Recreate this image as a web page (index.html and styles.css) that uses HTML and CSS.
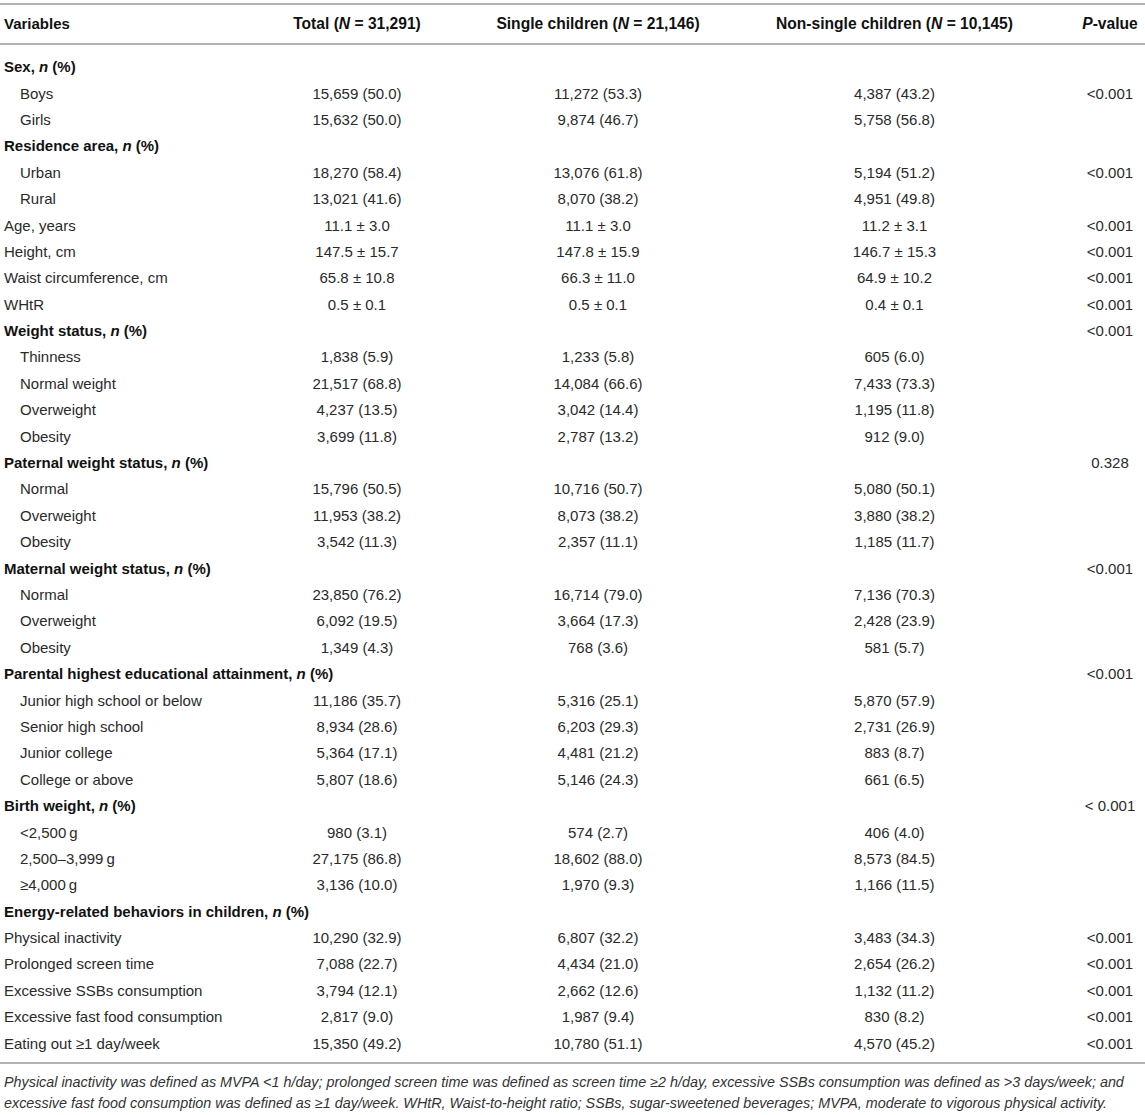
FILE: index.html
```html
<!DOCTYPE html>
<html lang="en">
<head>
  <meta charset="UTF-8">
  <title>Characteristics of single and non-single children</title>
  <link rel="stylesheet" href="styles.css">
</head>
<body>
  <table class="stats">
    <colgroup>
      <col class="col-var">
      <col class="col-total">
      <col class="col-single">
      <col class="col-non">
      <col class="col-p">
    </colgroup>
    <thead>
      <tr>
        <th class="var">Variables</th>
        <th>Total (<i>N</i> = 31,291)</th>
        <th>Single children (<i>N</i> = 21,146)</th>
        <th>Non-single children (<i>N</i> = 10,145)</th>
        <th><i>P</i>-value</th>
      </tr>
    </thead>
    <tbody>
      <tr class="group"><td>Sex, <i>n</i> (%)</td><td></td><td></td><td></td><td></td></tr>
      <tr><td class="sub">Boys</td><td>15,659 (50.0)</td><td>11,272 (53.3)</td><td>4,387 (43.2)</td><td>&lt;0.001</td></tr>
      <tr><td class="sub">Girls</td><td>15,632 (50.0)</td><td>9,874 (46.7)</td><td>5,758 (56.8)</td><td></td></tr>
      <tr class="group"><td>Residence area, <i>n</i> (%)</td><td></td><td></td><td></td><td></td></tr>
      <tr><td class="sub">Urban</td><td>18,270 (58.4)</td><td>13,076 (61.8)</td><td>5,194 (51.2)</td><td>&lt;0.001</td></tr>
      <tr><td class="sub">Rural</td><td>13,021 (41.6)</td><td>8,070 (38.2)</td><td>4,951 (49.8)</td><td></td></tr>
      <tr><td>Age, years</td><td>11.1 ± 3.0</td><td>11.1 ± 3.0</td><td>11.2 ± 3.1</td><td>&lt;0.001</td></tr>
      <tr><td>Height, cm</td><td>147.5 ± 15.7</td><td>147.8 ± 15.9</td><td>146.7 ± 15.3</td><td>&lt;0.001</td></tr>
      <tr><td>Waist circumference, cm</td><td>65.8 ± 10.8</td><td>66.3 ± 11.0</td><td>64.9 ± 10.2</td><td>&lt;0.001</td></tr>
      <tr><td>WHtR</td><td>0.5 ± 0.1</td><td>0.5 ± 0.1</td><td>0.4 ± 0.1</td><td>&lt;0.001</td></tr>
      <tr class="group"><td>Weight status, <i>n</i> (%)</td><td></td><td></td><td></td><td>&lt;0.001</td></tr>
      <tr><td class="sub">Thinness</td><td>1,838 (5.9)</td><td>1,233 (5.8)</td><td>605 (6.0)</td><td></td></tr>
      <tr><td class="sub">Normal weight</td><td>21,517 (68.8)</td><td>14,084 (66.6)</td><td>7,433 (73.3)</td><td></td></tr>
      <tr><td class="sub">Overweight</td><td>4,237 (13.5)</td><td>3,042 (14.4)</td><td>1,195 (11.8)</td><td></td></tr>
      <tr><td class="sub">Obesity</td><td>3,699 (11.8)</td><td>2,787 (13.2)</td><td>912 (9.0)</td><td></td></tr>
      <tr class="group"><td>Paternal weight status, <i>n</i> (%)</td><td></td><td></td><td></td><td>0.328</td></tr>
      <tr><td class="sub">Normal</td><td>15,796 (50.5)</td><td>10,716 (50.7)</td><td>5,080 (50.1)</td><td></td></tr>
      <tr><td class="sub">Overweight</td><td>11,953 (38.2)</td><td>8,073 (38.2)</td><td>3,880 (38.2)</td><td></td></tr>
      <tr><td class="sub">Obesity</td><td>3,542 (11.3)</td><td>2,357 (11.1)</td><td>1,185 (11.7)</td><td></td></tr>
      <tr class="group"><td>Maternal weight status, <i>n</i> (%)</td><td></td><td></td><td></td><td>&lt;0.001</td></tr>
      <tr><td class="sub">Normal</td><td>23,850 (76.2)</td><td>16,714 (79.0)</td><td>7,136 (70.3)</td><td></td></tr>
      <tr><td class="sub">Overweight</td><td>6,092 (19.5)</td><td>3,664 (17.3)</td><td>2,428 (23.9)</td><td></td></tr>
      <tr><td class="sub">Obesity</td><td>1,349 (4.3)</td><td>768 (3.6)</td><td>581 (5.7)</td><td></td></tr>
      <tr class="group"><td>Parental highest educational attainment, <i>n</i> (%)</td><td></td><td></td><td></td><td>&lt;0.001</td></tr>
      <tr><td class="sub">Junior high school or below</td><td>11,186 (35.7)</td><td>5,316 (25.1)</td><td>5,870 (57.9)</td><td></td></tr>
      <tr><td class="sub">Senior high school</td><td>8,934 (28.6)</td><td>6,203 (29.3)</td><td>2,731 (26.9)</td><td></td></tr>
      <tr><td class="sub">Junior college</td><td>5,364 (17.1)</td><td>4,481 (21.2)</td><td>883 (8.7)</td><td></td></tr>
      <tr><td class="sub">College or above</td><td>5,807 (18.6)</td><td>5,146 (24.3)</td><td>661 (6.5)</td><td></td></tr>
      <tr class="group"><td>Birth weight, <i>n</i> (%)</td><td></td><td></td><td></td><td>&lt; 0.001</td></tr>
      <tr><td class="sub">&lt;2,500&thinsp;g</td><td>980 (3.1)</td><td>574 (2.7)</td><td>406 (4.0)</td><td></td></tr>
      <tr><td class="sub">2,500–3,999&thinsp;g</td><td>27,175 (86.8)</td><td>18,602 (88.0)</td><td>8,573 (84.5)</td><td></td></tr>
      <tr><td class="sub">≥4,000&thinsp;g</td><td>3,136 (10.0)</td><td>1,970 (9.3)</td><td>1,166 (11.5)</td><td></td></tr>
      <tr class="group"><td>Energy-related behaviors in children, <i>n</i> (%)</td><td></td><td></td><td></td><td></td></tr>
      <tr><td>Physical inactivity</td><td>10,290 (32.9)</td><td>6,807 (32.2)</td><td>3,483 (34.3)</td><td>&lt;0.001</td></tr>
      <tr><td>Prolonged screen time</td><td>7,088 (22.7)</td><td>4,434 (21.0)</td><td>2,654 (26.2)</td><td>&lt;0.001</td></tr>
      <tr><td>Excessive SSBs consumption</td><td>3,794 (12.1)</td><td>2,662 (12.6)</td><td>1,132 (11.2)</td><td>&lt;0.001</td></tr>
      <tr><td>Excessive fast food consumption</td><td>2,817 (9.0)</td><td>1,987 (9.4)</td><td>830 (8.2)</td><td>&lt;0.001</td></tr>
      <tr><td>Eating out ≥1 day/week</td><td>15,350 (49.2)</td><td>10,780 (51.1)</td><td>4,570 (45.2)</td><td>&lt;0.001</td></tr>
    </tbody>
  </table>

  <p class="note">Physical inactivity was defined as MVPA &lt;1 h/day; prolonged screen time was defined as screen time ≥2 h/day, excessive SSBs consumption was defined as &gt;3 days/week; and excessive fast food consumption was defined as ≥1 day/week. WHtR, Waist-to-height ratio; SSBs, sugar-sweetened beverages; MVPA, moderate to vigorous physical activity.</p>
</body>
</html>
```

FILE: styles.css
```css
body {
  margin: 0;
  padding-top: 3px;
  background: #fff;
  font-family: "Liberation Sans", Arial, sans-serif;
  font-size: 15px;
  color: #2a2a2a;
}

.stats {
  width: 1145px;
  border-collapse: collapse;
  table-layout: fixed;
}

.col-var { width: 232px; }
.col-total { width: 250px; }
.col-single { width: 232px; }
.col-non { width: 361px; }
.col-p { width: 70px; }

.stats th {
  padding: 10px 0;
  line-height: 18px;
  font-size: 15.6px;
  font-weight: bold;
  color: #111;
  text-align: center;
  white-space: nowrap;
  border-top: 2px solid #b3b3b3;
  border-bottom: 2px solid #b3b3b3;
}

.stats th.var {
  font-size: 15px;
  text-align: left;
  padding-left: 4px;
}

.stats td {
  height: 26.4px;
  padding: 0;
  line-height: 18px;
  text-align: center;
  white-space: nowrap;
}

.stats td:first-child {
  text-align: left;
  padding-left: 4px;
}

.stats td.sub {
  padding-left: 20px;
}

.stats tr.group td:first-child {
  font-weight: bold;
  color: #111;
}

.stats tbody tr:first-child td {
  padding-top: 9px;
}

.stats tbody tr:last-child td {
  padding-bottom: 5px;
  border-bottom: 2px solid #b3b3b3;
}

.note {
  margin: 8px 0 0;
  padding: 0 4px;
  font-style: italic;
  font-size: 14.35px;
  line-height: 21px;
  color: #333;
}
```
